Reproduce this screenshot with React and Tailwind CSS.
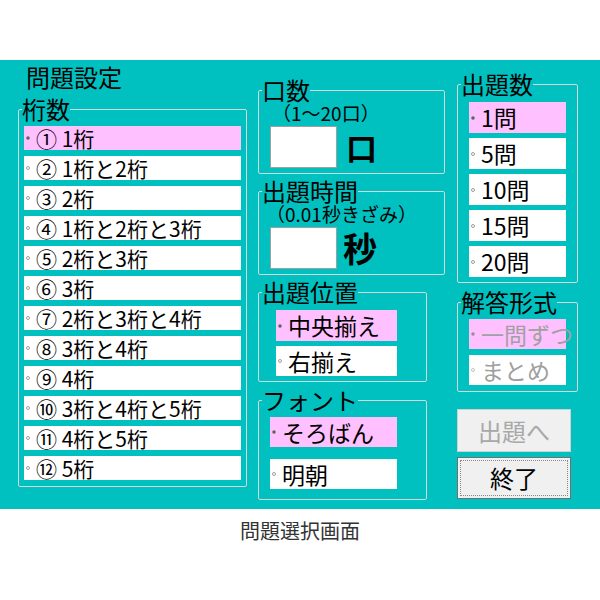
const FONT = { fontFamily: '"Noto Sans CJK JP", "Liberation Sans", sans-serif' }

const DIGITS = [
  '① 1桁', '② 1桁と2桁', '③ 2桁', '④ 1桁と2桁と3桁', '⑤ 2桁と3桁', '⑥ 3桁',
  '⑦ 2桁と3桁と4桁', '⑧ 3桁と4桁', '⑨ 4桁', '⑩ 3桁と4桁と5桁', '⑪ 4桁と5桁', '⑫ 5桁',
]
const COUNTS = ['1問', '5問', '10問', '15問', '20問']

function Dot({ on, dim }) {
  return (
    <span className={`w-[4px] h-[4px] rounded-full border shrink-0 ${on ? 'bg-[#505050] border-[#909090]' : 'bg-white border-[#a0a0a0]'} ${dim ? 'opacity-60' : ''}`} />
  )
}

function Radio({ label, on, dim, className = '' }) {
  return (
    <div className={`flex items-center pl-[2px] ${on ? 'bg-[#ffc0ff]' : 'bg-white'} ${className}`}>
      <Dot on={on} dim={dim} />
      <span className={`ml-[6px] whitespace-nowrap ${dim ? 'text-[#a0a0a0]' : 'text-black'}`}>{label}</span>
    </div>
  )
}

// legend sits after the fieldset's padding, so padding goes on the inner div
function Group({ title, className = '', inner = '', children }) {
  return (
    <fieldset className={`border border-[#d0d8d8] rounded-[2px] p-0 ${className}`}>
      <legend className="ml-[3px] px-0 text-[24px] leading-[26px] text-black">{title}</legend>
      <div className={inner}>{children}</div>
    </fieldset>
  )
}

export default function App() {
  return (
    <div className="w-[600px] h-[600px] bg-white" style={FONT}>
      <div className="h-[60px]" />
      <div className="h-[449px] bg-[#00c0c0] flex pl-[18px]">
        {/* left column */}
        <div className="w-[229px] flex flex-col pt-[3px]">
          <div className="ml-[8px] text-[24px] leading-[28px] text-black">問題設定</div>
          <Group title="桁数" className="mt-[5px]" inner="pt-[4px] pb-[6px] px-[5px]">
            <div className="flex flex-col gap-[6px]">
              {DIGITS.map((d, i) => (
                <Radio key={d} label={d} on={i === 0} className="h-[24px] text-[21px] leading-[24px]" />
              ))}
            </div>
          </Group>
        </div>

        {/* middle column */}
        <div className="ml-[11px] w-[187px] flex flex-col pt-[17px]">
          <Group title="口数" className="h-[97px]" inner="px-[11px]">
            <div className="text-[19px] leading-[20px] pl-[2px]">（1～20口）</div>
            <div className="flex items-center mt-[3px]">
              <div className="w-[67px] h-[42px] bg-white border border-[#a0a0a0]" />
              <span className="ml-[9px] text-[31px] leading-[34px] font-bold">口</span>
            </div>
          </Group>
          <Group title="出題時間" className="mt-[4px] h-[97px]" inner="px-[11px]">
            <div className="text-[19px] leading-[20px] -ml-[4px] whitespace-nowrap">（0.01秒きざみ）</div>
            <div className="flex items-center mt-[3px]">
              <div className="w-[67px] h-[42px] bg-white border border-[#a0a0a0]" />
              <span className="ml-[6px] text-[34px] leading-[38px] font-bold">秒</span>
            </div>
          </Group>
          <Group title="出題位置" className="mt-[4px] w-[169px] h-[103px]" inner="pl-[17px]">
            <div className="flex flex-col gap-[5px] pt-[5px]">
              <Radio label="中央揃え" on className="w-[121px] h-[31px] text-[23px] leading-[31px]" />
              <Radio label="右揃え" className="w-[121px] h-[30px] text-[23px] leading-[30px]" />
            </div>
          </Group>
          <Group title="フォント" className="mt-[5px] w-[169px] h-[113px]" inner="pl-[11px]">
            <div className="flex flex-col gap-[12px] pt-[4px]">
              <Radio label="そろばん" on className="w-[127px] h-[30px] text-[23px] leading-[30px]" />
              <Radio label="明朝" className="w-[127px] h-[30px] text-[23px] leading-[30px]" />
            </div>
          </Group>
        </div>

        {/* right column */}
        <div className="ml-[12px] w-[121px] flex flex-col pt-[11px]">
          <Group title="出題数" className="h-[212px]" inner="pl-[11px]">
            <div className="flex flex-col gap-[5px] pt-[5px]">
              {COUNTS.map((c, i) => (
                <Radio key={c} label={c} on={i === 0} className="w-[97px] h-[31px] text-[23px] leading-[31px]" />
              ))}
            </div>
          </Group>
          <Group title="解答形式" className="mt-[6px] h-[103px]" inner="pl-[11px]">
            <div className="flex flex-col gap-[6px] pt-[4px]">
              <Radio label="一問ずつ" on dim className="w-[97px] h-[30px] text-[23px] leading-[30px]" />
              <Radio label="まとめ" dim className="w-[97px] h-[30px] text-[23px] leading-[30px]" />
            </div>
          </Group>
          <button className="mt-[17px] w-[114px] h-[43px] bg-[#f0f0f0] border border-[#d0d0d0] text-[24px] text-[#a8a8a8]">
            出題へ
          </button>
          <button className="mt-[5px] w-[114px] h-[42px] bg-[#f0f0f0] border border-[#707070] p-[2px]">
            <div className="w-full h-full border border-dotted border-[#888] flex items-center justify-center text-[24px] text-black">
              終了
            </div>
          </button>
        </div>
      </div>
      <div className="text-center text-[20px] leading-[28px] mt-[8px] text-[#333]">問題選択画面</div>
    </div>
  )
}
